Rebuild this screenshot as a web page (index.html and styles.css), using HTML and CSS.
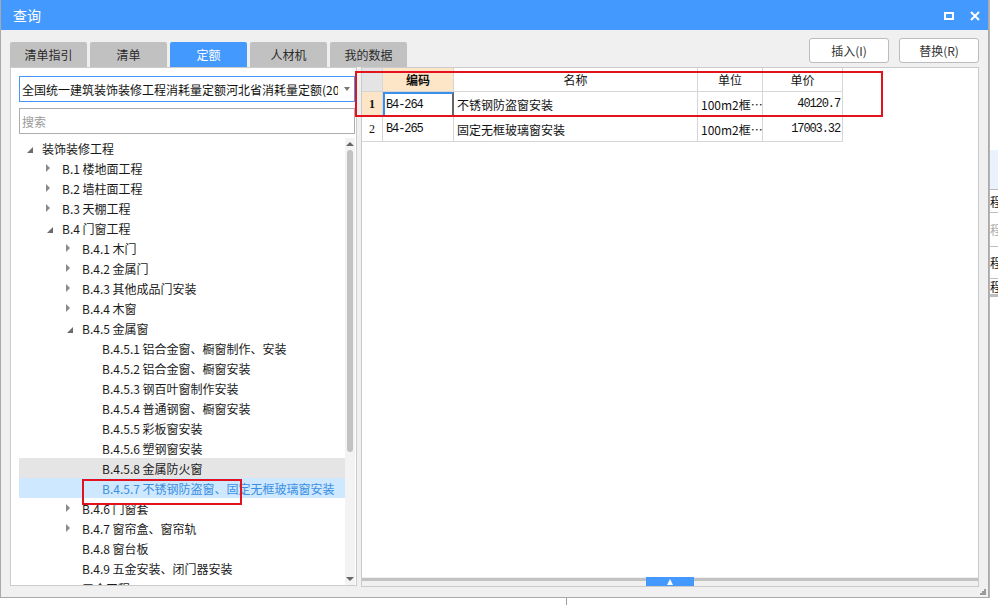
FILE: index.html
```html
<!DOCTYPE html>
<html lang="zh-CN">
<head>
<meta charset="utf-8">
<title>查询</title>
<link rel="stylesheet" href="styles.css">
</head>
<body>
<div class="screen">
  <div class="dialog">
    <div class="titlebar">
      <span class="title">查询</span>
      <div class="winbtns">
        <span class="maxbtn"></span>
        <svg class="closebtn" width="10" height="10" viewBox="0 0 10 10"><path d="M1 1L9 9M9 1L1 9" stroke="#fff" stroke-width="2"/></svg>
      </div>
    </div>
    <div class="toolbar">
      <div class="tabs">
        <div class="tab">清单指引</div>
        <div class="tab">清单</div>
        <div class="tab active">定额</div>
        <div class="tab">人材机</div>
        <div class="tab">我的数据</div>
      </div>
      <div class="actions">
        <button class="btn">插入(I)</button>
        <button class="btn">替换(R)</button>
      </div>
    </div>
    <div class="panels">
      <div class="left">
        <div class="combo"><span class="combo-text">全国统一建筑装饰装修工程消耗量定额河北省消耗量定额(2012)</span><span class="caret"></span></div>
        <div class="search">搜索</div>
        <div class="treewrap">
          <div class="tree">
            <div class="row l0"><span class="tg exp"></span>装饰装修工程</div>
            <div class="row l1"><span class="tg col"></span>B.1 楼地面工程</div>
            <div class="row l1"><span class="tg col"></span>B.2 墙柱面工程</div>
            <div class="row l1"><span class="tg col"></span>B.3 天棚工程</div>
            <div class="row l1"><span class="tg exp"></span>B.4 门窗工程</div>
            <div class="row l2"><span class="tg col"></span>B.4.1 木门</div>
            <div class="row l2"><span class="tg col"></span>B.4.2 金属门</div>
            <div class="row l2"><span class="tg col"></span>B.4.3 其他成品门安装</div>
            <div class="row l2"><span class="tg col"></span>B.4.4 木窗</div>
            <div class="row l2"><span class="tg exp"></span>B.4.5 金属窗</div>
            <div class="row l3"><span class="tg"></span>B.4.5.1 铝合金窗、橱窗制作、安装</div>
            <div class="row l3"><span class="tg"></span>B.4.5.2 铝合金窗、橱窗安装</div>
            <div class="row l3"><span class="tg"></span>B.4.5.3 钢百叶窗制作安装</div>
            <div class="row l3"><span class="tg"></span>B.4.5.4 普通钢窗、橱窗安装</div>
            <div class="row l3"><span class="tg"></span>B.4.5.5 彩板窗安装</div>
            <div class="row l3"><span class="tg"></span>B.4.5.6 塑钢窗安装</div>
            <div class="row l3 hover"><span class="tg"></span>B.4.5.8 金属防火窗</div>
            <div class="row l3 sel"><span class="tg"></span>B.4.5.7 不锈钢防盗窗、固定无框玻璃窗安装</div>
            <div class="row l2"><span class="tg col"></span>B.4.6 门窗套</div>
            <div class="row l2"><span class="tg col"></span>B.4.7 窗帘盒、窗帘轨</div>
            <div class="row l2"><span class="tg"></span>B.4.8 窗台板</div>
            <div class="row l2"><span class="tg"></span>B.4.9 五金安装、闭门器安装</div>
            <div class="row l2"><span class="tg"></span>五金工程</div>
          </div>
          <div class="vscroll">
            <span class="sb-btn"><span class="tri-up"></span></span>
            <span class="thumb"></span>
            <span class="sb-fill"></span>
            <span class="sb-btn"><span class="tri-down"></span></span>
          </div>
        </div>
      </div>
      <div class="right">
        <div class="grid">
          <div class="c corner"></div>
          <div class="c hd cur-col">编码</div>
          <div class="c hd">名称</div>
          <div class="c hd">单位</div>
          <div class="c hd">单价</div>

          <div class="c num cur-row">1</div>
          <div class="c code cur">B4-264</div>
          <div class="c txt">不锈钢防盗窗安装</div>
          <div class="c txt">100m2框…</div>
          <div class="c val">40120.7</div>

          <div class="c num">2</div>
          <div class="c code">B4-265</div>
          <div class="c txt">固定无框玻璃窗安装</div>
          <div class="c txt">100m2框…</div>
          <div class="c val">17003.32</div>
        </div>
        <div class="hscroll"><span class="hbtn"><span class="htri"></span></span></div>
      </div>
      <div class="mark mark-tree"></div>
      <div class="mark mark-grid"></div>
    </div>
    <div class="foot">
      <svg class="grip" width="7" height="7" viewBox="0 0 7 7"><g fill="#9a9a9a"><rect x="5" y="1" width="2" height="2"/><rect x="3" y="3" width="2" height="2"/><rect x="5" y="3" width="2" height="2"/><rect x="1" y="5" width="2" height="2"/><rect x="3" y="5" width="2" height="2"/><rect x="5" y="5" width="2" height="2"/></g></svg>
    </div>
  </div>
  <div class="behind">
    <div class="bh-top"></div>
    <div class="bh-band"></div>
    <div class="bh-row r1">程</div>
    <div class="bh-row r2 dim">程</div>
    <div class="bh-row r3">程</div>
    <div class="bh-row r4">程</div>
    <div class="bh-bar"></div>
  </div>
</div>
<div class="below"><span class="vline"></span></div>
</body>
</html>
```

FILE: styles.css
```css
* { box-sizing: border-box; }
html, body { margin: 0; padding: 0; background: #fff; }
body {
  font-family: "Noto Sans CJK SC", "Noto Sans", sans-serif;
  font-size: 12px;
  color: #222;
  width: 998px;
  height: 605px;
  overflow: hidden;
}

.screen { display: flex; height: 598px; }

.dialog {
  width: 989px;
  height: 598px;
  background: #f0f0f0;
  border: 1px solid #a9a9a9;
  border-top: 0;
  display: flex;
  flex-direction: column;
}

/* title bar */
.titlebar {
  height: 30px;
  flex: none;
  background: #4499ff;
  display: flex;
  align-items: center;
  justify-content: space-between;
  padding: 0 8px 0 12px;
}
.title { color: #fff; font-size: 14px; }
.winbtns { display: flex; align-items: center; gap: 16px; padding-top: 1px; }
.maxbtn { width: 10px; height: 8px; border: 2px solid #fff; display: block; }
.closebtn { display: block; }

/* toolbar */
.toolbar {
  height: 37px;
  flex: none;
  display: flex;
  justify-content: space-between;
  padding: 0 9px;
}
.tabs { display: flex; align-self: flex-end; gap: 3px; }
.tab {
  width: 77px;
  height: 25px;
  background: #c1c1c1;
  border-radius: 2px 2px 0 0;
  color: #2a2a2a;
  font-size: 12px;
  display: flex;
  align-items: center;
  justify-content: center;
}
.tab.active { background: #4499ff; color: #fff; }
.actions { display: flex; gap: 10px; padding-top: 8px; }
.btn {
  width: 80px;
  height: 25px;
  background: #fff;
  border: 1px solid #bcbcbc;
  border-radius: 3px;
  font-family: inherit;
  font-size: 12px;
  color: #333;
  padding: 0;
}

/* panels */
.panels {
  position: relative;
  height: 520px;
  flex: none;
  display: flex;
  align-items: flex-start;
  gap: 4px;
  padding: 0 9px;
}
.left {
  width: 347px;
  height: 519px;
  background: #fff;
  border: 1px solid #cbcbcb;
  padding: 8px 1px 0 8px;
  display: flex;
  flex-direction: column;
}
.combo {
  height: 26px;
  flex: none;
  border: 1px solid #4499ff;
  display: flex;
  align-items: center;
  padding: 0 6px 0 2px;
}
.combo-text {
  flex: none;
  overflow: hidden;
  white-space: nowrap;
  width: 316px;
  margin-right: 6px;
  font-size: 12px;
  color: #111;
}
.caret {
  width: 0; height: 0;
  border-left: 3px solid transparent;
  border-right: 3px solid transparent;
  border-top: 4px solid #777;
}
.search {
  height: 26px;
  flex: none;
  margin-top: 6px;
  border: 1px solid #adadad;
  color: #9a9a9a;
  display: flex;
  align-items: center;
  padding-left: 2px;
}
.treewrap {
  flex: 1;
  margin-top: 4px;
  display: flex;
  overflow: hidden;
}
.tree { width: 326px; overflow: hidden; }
.row {
  height: 20px;
  display: flex;
  align-items: center;
  white-space: nowrap;
  font-size: 12px;
  color: #1a1a1a;
}
.row.l0 { padding-left: 7px; }
.row.l1 { padding-left: 27px; }
.row.l2 { padding-left: 47px; }
.row.l3 { padding-left: 67px; }
.row.hover { background: #e5e5e5; }
.row.sel { background: #cde8ff; color: #3b8ee2; }
.tg { width: 16px; flex: none; height: 20px; display: flex; align-items: center; }
.tg.exp::before {
  content: "";
  width: 0; height: 0;
  margin: 3px 0 0 1px;
  border-left: 6px solid transparent;
  border-bottom: 6px solid #6b6b6b;
}
.tg.col::before {
  content: "";
  width: 0; height: 0;
  border-left: 4px solid #8a8a8a;
  border-top: 4px solid transparent;
  border-bottom: 4px solid transparent;
}
.vscroll {
  width: 10px;
  flex: none;
  background: #f3f3f3;
  display: flex;
  flex-direction: column;
  align-items: center;
}
.sb-btn { height: 12px; flex: none; display: flex; align-items: center; justify-content: center; }
.tri-up { width: 0; height: 0; border-left: 4px solid transparent; border-right: 4px solid transparent; border-bottom: 4px solid #666; }
.tri-down { width: 0; height: 0; border-left: 4px solid transparent; border-right: 4px solid transparent; border-top: 4px solid #666; }
.thumb { width: 6px; height: 302px; flex: none; background: #c2c2c2; border-radius: 3px; }
.sb-fill { flex: 1; }

/* right grid */
.right {
  width: 618px;
  height: 520px;
  background: #fff;
  border: 1px solid #cbcbcb;
  display: flex;
  flex-direction: column;
}
.grid {
  flex: 1;
  display: grid;
  grid-template-columns: 21px 71px 244px 65px 80px;
  grid-template-rows: 24px 25px 25px;
  align-content: start;
}
.c {
  border-right: 1px solid #d6d6d6;
  border-bottom: 1px solid #d6d6d6;
  display: flex;
  align-items: center;
  font-size: 12px;
  color: #111;
  white-space: nowrap;
  overflow: hidden;
}
.corner { background: #e4e4e4; }
.hd { justify-content: center; font-size: 12px; }
.cur-col { background: #fde6c8; font-weight: bold; }
.num { justify-content: center; font-family: "Liberation Serif", serif; font-size: 12px; }
.cur-row { background: #fde6c8; font-weight: bold; }
.code { font-family: "Liberation Mono", monospace; font-size: 12px; letter-spacing: -1.1px; padding-left: 3px; }
.code.cur {
  border-top: 2px solid #3d8ee8;
  border-left: 2px solid #3d8ee8;
  border-right: 2px solid #666;
  padding-left: 1px;
}
.txt { padding-left: 3px; }
.val { justify-content: flex-end; padding-right: 2px; font-family: "Liberation Mono", monospace; font-size: 12px; letter-spacing: -1.1px; }
.hscroll {
  height: 9px;
  flex: none;
  display: flex;
  justify-content: center;
  background: linear-gradient(#f0f0f0 0 1px, #c2c2c2 1px 4px, #f0f0f0 4px);
}
.hbtn { width: 48px; height: 9px; background: #4499ff; display: flex; align-items: center; justify-content: center; }
.htri { width: 0; height: 0; border-left: 3px solid transparent; border-right: 3px solid transparent; border-bottom: 6px solid #fff; }

/* annotation marks */
.mark { position: absolute; border: 2px solid #e3131d; }
.mark-grid { left: 354px; top: 4px; width: 528px; height: 46px; }
.mark-tree { left: 81px; top: 412px; width: 160px; height: 26px; }

.foot {
  flex: 1;
  display: flex;
  justify-content: flex-end;
  align-items: flex-end;
  padding: 0 2px 2px 0;
}
.grip { display: block; }

/* app behind the dialog */
.behind {
  flex: 1;
  background: #fff;
  border-left: 1px solid #b4b4b4;
  display: flex;
  flex-direction: column;
  overflow: hidden;
}
.bh-top { height: 150px; flex: none; }
.bh-band { height: 40px; flex: none; background: #eaf2fd; border-bottom: 1px solid #bdbdbd; }
.bh-row {
  flex: none;
  border-bottom: 1px solid #bdbdbd;
  font-size: 12px;
  color: #111;
  white-space: nowrap;
  display: flex;
  align-items: center;
}
.bh-row.dim { color: #aaa; }
.r1 { height: 23px; }
.r2 { height: 34px; }
.r3 { height: 32px; }
.r4 { height: 18px; border-bottom: 3px solid #bdbdbd; }
.bh-bar { flex: 1; }

.below { height: 7px; padding-left: 566px; display: flex; }
.vline { width: 1px; height: 7px; background: #9c9c9c; display: block; }
```
